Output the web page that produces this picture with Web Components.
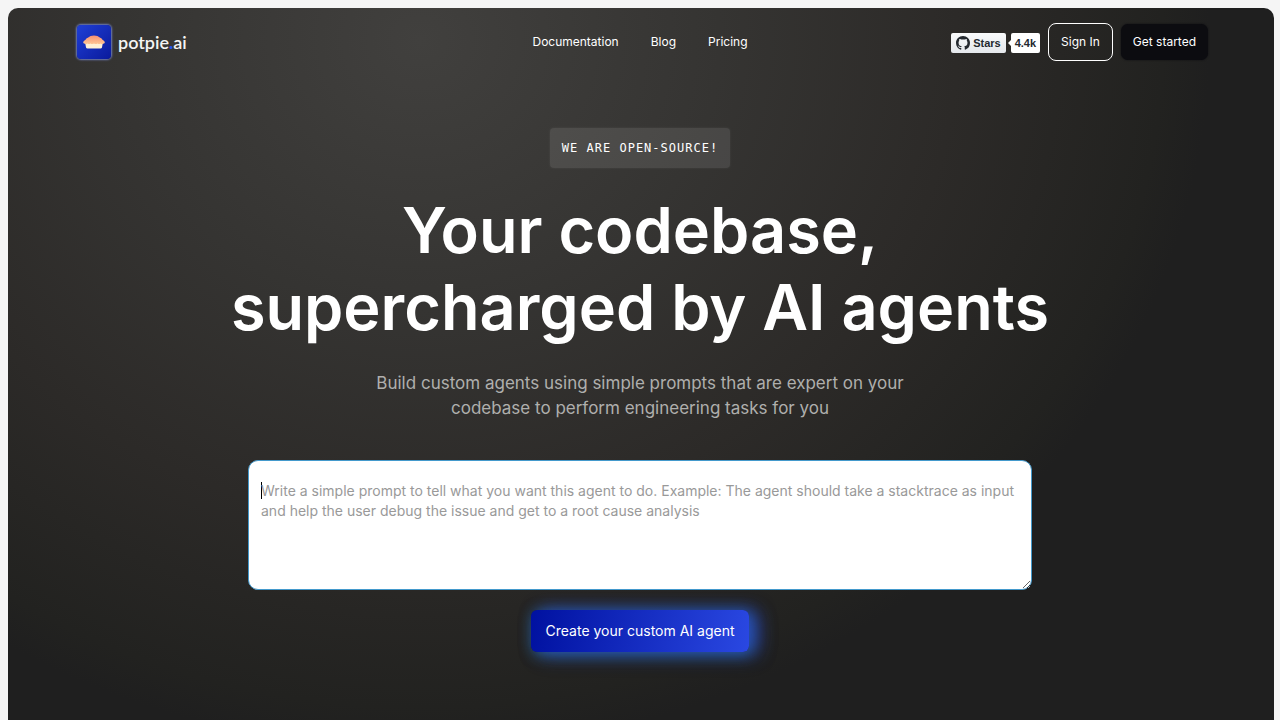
<!DOCTYPE html>
<html lang="en">
<head>
<meta charset="utf-8">
<meta name="viewport" content="width=device-width, initial-scale=1">
<title>potpie.ai</title>
<style>
  html { background: #f5f5f5; }
  body { margin: 8px 6px 0 8px; font-family: Inter, "Liberation Sans", sans-serif; color: #fff; }
</style>
</head>
<body>
<pp-page>
  <pp-header slot="header"></pp-header>
  <pp-hero>
    <pp-tag slot="tag">WE ARE OPEN-SOURCE!</pp-tag>
    <span slot="title">Your codebase,<br>supercharged by AI agents</span>
    <span slot="lead">Build custom agents using simple prompts that are expert on your codebase to perform engineering tasks for you</span>
    <pp-prompt></pp-prompt>
  </pp-hero>
</pp-page>
<script>
const define = (name, html, ready) => {
  const template = document.createElement('template');
  template.innerHTML = html;
  customElements.define(name, class extends HTMLElement {
    constructor() {
      super();
      this.attachShadow({ mode: 'open' }).append(template.content.cloneNode(true));
    }
    connectedCallback() { if (ready) ready(this.shadowRoot); }
  });
};

define('pp-page', `
<style>
  :host { display: block; box-sizing: border-box; min-height: calc(100vh - 8px); padding-right: 2px;
    border-radius: 10px 10px 0 0;
    background: radial-gradient(ellipse 790px 710px at 412px 32px, #41403e 0%, #353432 38%, #2c2a28 68%, #222220 94%, #1f1f1f 100%); }
</style>
<slot name="header"></slot>
<main><slot></slot></main>`);

define('pp-logo', `
<style>
  :host { display: block; }
  a { display: flex; align-items: center; gap: 7px; color: #f4f4f4; text-decoration: none;
    font: 600 18px/20px Lato, sans-serif; }
  .tile { display: block; width: 34px; height: 34px; box-sizing: border-box; border-radius: 4px;
    background: linear-gradient(135deg, #1f3fd6, #0a1a9c); box-shadow: 0 0 2px 1px #6f7dbb; }
  .dot { color: #2352e8; font-weight: 900; }
</style>
<a href="#">
  <svg class="tile" viewBox="0 0 34 34" aria-hidden="true">
    <defs><linearGradient id="crust" x1="0" y1="0" x2="0" y2="1"><stop offset="0" stop-color="#f58f72"/><stop offset="1" stop-color="#ffc795"/></linearGradient></defs>
    <path d="M8 17H26L25 22.500Q24.600 23.500 23.500 23.500H10.500Q9.400 23.500 9 22.500Z" fill="#fff0d5"/>
    <path d="M8 18.800Q5.500 18.500 6.500 16.500Q6.700 15.500 8.300 15Q9 13 11.200 12.500Q13 10.500 17 10.500Q21 10.500 22.800 12.500Q25 13 25.700 15Q27.300 15.500 27.500 16.500Q28.500 18.500 26 18.800Q24.500 19.500 23.500 18.500Q22 19.500 20.500 18.500Q18.800 19.500 17 18.500Q15.200 19.500 13.500 18.500Q12 19.500 10.500 18.500Q9.500 19.500 8 18.800Z" fill="url(#crust)"/>
  </svg>
  <span>potpie<span class="dot">.</span>ai</span>
</a>`);

define('pp-stars', `
<style>
  :host { display: flex; align-items: center; gap: 5px; font: 700 11px/14px "Liberation Sans", sans-serif; }
  a { display: flex; align-items: center; box-sizing: border-box; height: 20px; border-radius: 2px;
    color: #24292f; text-decoration: none; }
  .button { gap: 3px; padding: 0 5px; background: linear-gradient(#f9fafb, #e5e8ec); }
  .count { position: relative; padding: 0 4px; background: #fff; }
  .count::before { content: ""; position: absolute; left: -3px; top: 7px;
    border: 3px solid transparent; border-left-width: 0; border-right-color: #fff; }
  svg { width: 14px; height: 14px; display: block; }
</style>
<a class="button" href="#">
  <svg viewBox="0 0 16 16" aria-hidden="true"><path fill="#24292f" d="M8 0C3.580 0 0 3.580 0 8c0 3.540 2.290 6.530 5.470 7.590.4.070.55-.17.55-.38 0-.19-.01-.82-.01-1.490-2.010.37-2.530-.49-2.690-.94-.09-.23-.48-.94-.82-1.130-.28-.15-.68-.52-.01-.53.63-.01 1.080.58 1.230.82.72 1.210 1.870.87 2.330.66.07-.52.28-.87.51-1.070-1.780-.2-3.640-.89-3.640-3.950 0-.87.31-1.590.82-2.150-.08-.2-.36-1.020.08-2.120 0 0 .67-.21 2.200.82.64-.18 1.320-.27 2-.27s1.360.09 2 .27c1.530-1.040 2.200-.82 2.200-.82.44 1.100.16 1.920.08 2.120.51.56.82 1.270.82 2.150 0 3.070-1.870 3.750-3.650 3.950.29.25.54.73.54 1.480 0 1.070-.01 1.930-.01 2.200 0 .21.15.46.55.38A8.010 8.010 0 0 0 16 8c0-4.420-3.580-8-8-8Z"/></svg>
  <span>Stars</span>
</a>
<a class="count" href="#">4.4k</a>`);

define('pp-button', `
<style>
  :host { display: block; }
  button { display: block; box-sizing: border-box; height: 38px; padding: 0 12px; border: 1px solid #fff; border-radius: 8px;
    background: transparent; color: #fff; font: 400 12px/16px Inter, sans-serif; white-space: nowrap; cursor: pointer; }
  :host([kind="dark"]) button { height: 36px; border: 0; border-radius: 7px; background: #0c0c10; box-shadow: 0 0 2px #0c0c10; }
  :host([kind="glow"]) button { height: 42px; padding: 0 15px; border: 0; border-radius: 6px; font-size: 14px;
    background: linear-gradient(100deg, #0011a0, #2a48e2);
    box-shadow: 8px 0 18px #2a48e299, 2px 2px 14px #2378a0b3, 8px 4px 20px #2a50b066; }
</style>
<button type="button"><slot></slot></button>`);

define('pp-header', `
<style>
  :host { display: grid; grid-template-columns: 1fr auto 1fr; align-items: center; box-sizing: border-box;
    height: 68px; max-width: 1136px; margin: 0 auto; padding-left: 5px; }
  nav { display: flex; gap: 32px; padding-right: 5px; font-size: 12px; line-height: 16px; }
  nav a { color: #fff; text-decoration: none; }
  .actions { display: flex; align-items: center; justify-content: flex-end; gap: 8px; }
  pp-stars { padding-top: 2px; }
</style>
<pp-logo></pp-logo>
<nav><a href="#">Documentation</a><a href="#">Blog</a><a href="#">Pricing</a></nav>
<div class="actions">
  <pp-stars></pp-stars>
  <pp-button>Sign In</pp-button>
  <pp-button kind="dark">Get started</pp-button>
</div>`);

define('pp-tag', `
<style>
  :host { display: block; box-sizing: border-box; padding: 12px; border-radius: 4px; background: #ffffff1a;
    box-shadow: 0 0 3px #ffffff14; font: 400 12px/16px "DejaVu Sans Mono", monospace; letter-spacing: 1px; }
</style>
<slot></slot>`);

define('pp-hero', `
<style>
  :host { display: flex; flex-direction: column; align-items: center; padding: 52px 24px 60px; text-align: center; }
  h1 { margin: 24px 0 0; font-size: 63px; line-height: 77px; font-weight: 600; }
  p { max-width: 540px; margin: 25px 0 39px; font-size: 17px; line-height: 25px; color: #afafad; }
  ::slotted(pp-prompt) { width: 100%; max-width: 784px; }
</style>
<slot name="tag"></slot>
<h1><slot name="title"></slot></h1>
<p><slot name="lead"></slot></p>
<slot></slot>`);

define('pp-prompt', `
<style>
  :host { display: block; }
  form { display: flex; flex-direction: column; align-items: center; gap: 20px; }
  textarea { display: block; box-sizing: border-box; width: 100%; height: 130px; padding: 20px 12px; resize: both;
    border: 1px solid #4399cc; border-radius: 10px; outline: 0; background: #fff; color: #000;
    font: 400 14px/20px Inter, sans-serif; }
  textarea::placeholder { color: #999; }
  /* A steady caret while the box is still empty. */
  textarea:placeholder-shown { caret-color: transparent;
    background: linear-gradient(#000, #000) 12px 21px / 1px 17px no-repeat #fff; }
</style>
<form>
  <textarea aria-label="Agent prompt" placeholder="Write a simple prompt to tell what you want this agent to do. Example: The agent should take a stacktrace as input and help the user debug the issue and get to a root cause analysis"></textarea>
  <pp-button kind="glow">Create your custom AI agent</pp-button>
</form>`, root => root.querySelector('textarea').focus());
</script>
</body>
</html>
